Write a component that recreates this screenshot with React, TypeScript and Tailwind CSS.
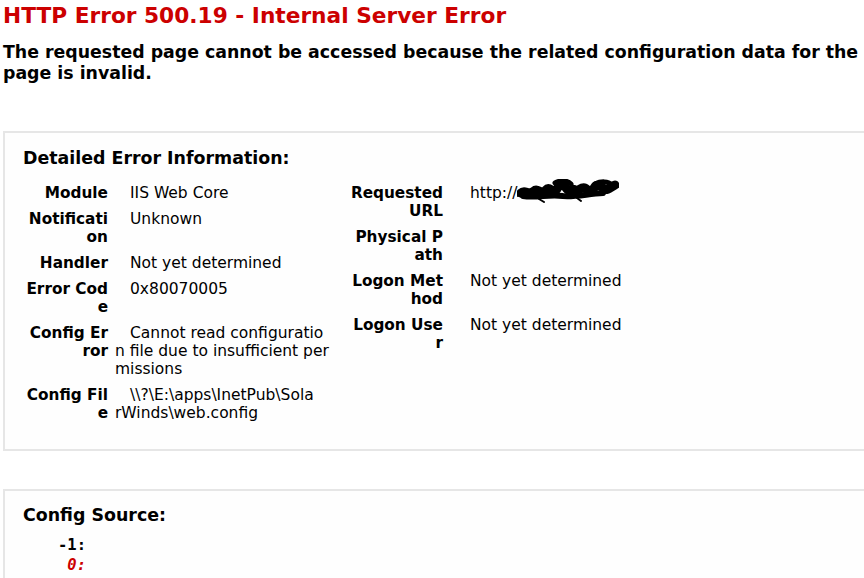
import React from "react";

type Row = { label: string[]; value: string[] };

const leftRows: Row[] = [
  { label: ["Module"], value: ["IIS Web Core"] },
  { label: ["Notificati", "on"], value: ["Unknown"] },
  { label: ["Handler"], value: ["Not yet determined"] },
  { label: ["Error Cod", "e"], value: ["0x80070005"] },
  {
    label: ["Config Er", "ror"],
    value: ["Cannot read configuratio", "n file due to insufficient per", "missions"],
  },
  { label: ["Config Fil", "e"], value: ["\\\\?\\E:\\apps\\InetPub\\Sola", "rWinds\\web.config"] },
];

const rightRows: Row[] = [
  { label: ["Requested", "URL"], value: ["http://"] },
  { label: ["Physical P", "ath"], value: [""] },
  { label: ["Logon Met", "hod"], value: ["Not yet determined"] },
  { label: ["Logon Use", "r"], value: ["Not yet determined"] },
];

function Lines({ lines, first }: { lines: string[]; first?: string }) {
  return (
    <>
      {lines.map((l, i) => (
        <div key={i} className={i === 0 && first ? first : ""}>
          {l || "\u00a0"}
        </div>
      ))}
    </>
  );
}

function Scribble() {
  // redacted host name in the screenshot
  return (
    <svg width="102" height="24" viewBox="0 0 102 24" className="inline-block align-middle -mt-[6px]">
      <path
        d="M4 14 C8 10 12 17 17 12 C21 8 24 17 29 11 C33 6 36 16 40 10 C43 5 46 4 49 9 C52 14 55 8 58 11 C61 14 64 7 68 9 C71 11 74 15 77 9 C80 4 84 7 87 10 C90 12 94 8 98 6"
        stroke="#000"
        strokeWidth="9"
        fill="none"
        strokeLinecap="round"
        strokeLinejoin="round"
      />
      <path d="M6 17 C20 19 32 15 46 17 C58 18 70 15 86 14" stroke="#000" strokeWidth="6" fill="none" strokeLinecap="round" />
      <path d="M38 4 C43 1 50 1 54 5 M78 5 C84 2 91 2 95 6" stroke="#000" strokeWidth="5" fill="none" strokeLinecap="round" />
      <path d="M2 12 L1 17 M22 20 L27 23 M60 19 L64 22 M100 4 L101 8" stroke="#000" strokeWidth="2" fill="none" strokeLinecap="round" />
    </svg>
  );
}

export default function App() {
  return (
    <div className="w-[864px] h-[578px] overflow-hidden bg-white text-black font-['DejaVu_Sans',Verdana,sans-serif] pl-[3px]">
      <h1 className="font-bold text-[21.7px] leading-[28px] text-[#cc0000] mt-[2px] whitespace-nowrap">
        HTTP Error 500.19 - Internal Server Error
      </h1>
      <h2 className="font-bold text-[17.35px] leading-[21px] mt-[12px] whitespace-nowrap">
        The requested page cannot be accessed because the related configuration data for the
        <br />
        page is invalid.
      </h2>

      <div className="mt-[47px] w-[900px] border-2 border-[#e6e6e6] bg-[#fefefe] pl-[18px] pt-[14px] pb-[27px]">
        <h3 className="font-bold text-[17.4px] leading-[22px]">Detailed Error Information:</h3>
        <div className="flex items-start mt-[15px] leading-[18px]">
          <div className="grid grid-cols-[82px_212px] content-start gap-y-[8px] ml-[3px] w-[301px]">
            {leftRows.map((r, i) => (
              <React.Fragment key={i}>
                <div className="font-bold text-[15.3px] text-right whitespace-nowrap">
                  <Lines lines={r.label} />
                </div>
                <div className="pl-[7px] text-[15.5px] whitespace-nowrap">
                  <Lines lines={r.value} first="pl-[15px]" />
                </div>
              </React.Fragment>
            ))}
          </div>
          <div className="grid grid-cols-[96px_300px] content-start gap-y-[8px] ml-[20px]">
            {rightRows.map((r, i) => (
              <React.Fragment key={i}>
                <div className="font-bold text-[15.3px] text-right whitespace-nowrap">
                  <Lines lines={r.label} />
                </div>
                <div className="pl-[27px] text-[15.5px] whitespace-nowrap">
                  {i === 0 ? (
                    <div>
                      http://
                      <Scribble />
                    </div>
                  ) : (
                    <Lines lines={r.value} />
                  )}
                </div>
              </React.Fragment>
            ))}
          </div>
        </div>
      </div>

      <div className="mt-[38px] w-[900px] h-[200px] border-2 border-[#e6e6e6] bg-[#fefefe] pl-[18px] pt-[13px]">
        <h3 className="font-bold text-[17.4px] leading-[22px]">Config Source:</h3>
        <div className="mt-[9px] w-[63px] text-right font-['DejaVu_Sans_Mono',monospace] font-bold text-[15.5px] leading-[20px]">
          <div>-1:</div>
          <div className="italic text-[#cc0000]">0:</div>
        </div>
      </div>
    </div>
  );
}
